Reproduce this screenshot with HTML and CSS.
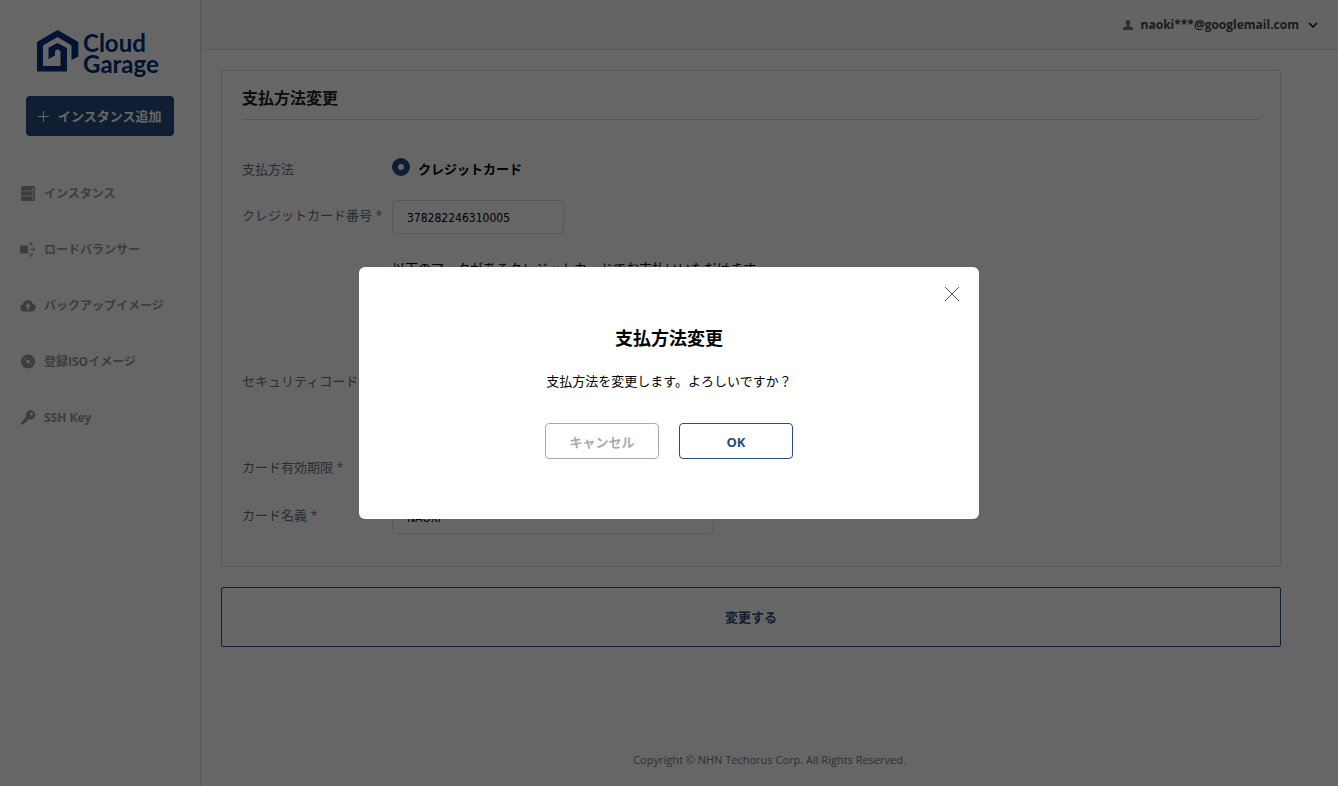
FILE: index.html
```html
<!DOCTYPE html>
<html lang="ja">
<head>
<meta charset="utf-8">
<title>支払方法変更 | Cloud Garage</title>
<link rel="stylesheet" href="styles.css">
</head>
<body>
<div class="app">
  <aside class="sidebar">
    <a class="logo" href="#">
      <svg class="logo-mark" viewBox="0 0 42 42" aria-hidden="true">
        <path d="M0 12 20.500 0 41.300 12V26.500L34.500 30V15.500L20.500 7 6 15.500V36H23.500V21L20.500 19.200 18 20.800V25.500L11.500 29V17.800L20.500 13 30 18V41.500H0Z"/>
      </svg>
      <span class="logo-text">
        <span>Cloud</span>
        <span>Garage</span>
      </span>
    </a>
    <button class="add-button" type="button">
      <svg class="add-icon" viewBox="0 0 11 11" aria-hidden="true"><path d="M5.5 0V11M0 5.5H11"/></svg>
      <span>インスタンス追加</span>
    </button>
    <nav class="nav">
      <a class="nav-item" href="#">
        <svg class="nav-icon" viewBox="0 0 16 16" aria-hidden="true"><path fill-rule="evenodd" d="M2 0H14Q15 0 15 1V4.500H1V1Q1 0 2 0ZM12 2V3.500H13.500V2ZM1 5.200H15V9.500H1ZM12 6.700V8.200H13.500V6.700ZM1 10.200H15V14Q15 15 14 15H2Q1 15 1 14ZM12 11.700V13.200H13.500V11.700Z"/></svg>
        <span>インスタンス</span>
      </a>
      <a class="nav-item" href="#">
        <svg class="nav-icon" viewBox="0 0 16 16" aria-hidden="true"><rect x="0" y="3.500" width="8" height="8" rx="1"/><path class="line" d="M10 7.500H15M12.800 5.300 15 7.500 12.800 9.700M9.500 3.500 12 1M9.500 1H12V3.500M9.500 11.500 12 14M12 11.500V14H9.500"/></svg>
        <span>ロードバランサー</span>
      </a>
      <a class="nav-item" href="#">
        <svg class="nav-icon" viewBox="0 0 16 16" aria-hidden="true"><path fill-rule="evenodd" d="M4 13.500A4 4 0 0 1 2.800 5.800 5.300 5.300 0 0 1 12.800 5.700 4 4 0 0 1 12.300 13.500ZM8 5 4.800 8.500H7V11.500H9V8.500H11.200Z"/></svg>
        <span>バックアップイメージ</span>
      </a>
      <a class="nav-item" href="#">
        <svg class="nav-icon" viewBox="0 0 16 16" aria-hidden="true"><path fill-rule="evenodd" d="M8 .5A7 7 0 1 1 8 14.500 7 7 0 0 1 8 .5ZM8 5.700A1.800 1.800 0 1 0 8 9.300 1.800 1.800 0 0 0 8 5.700Z"/><path class="shine" d="M3.800 6.500A4.500 4.500 0 0 1 7 3.300M12.200 8.500A4.500 4.500 0 0 1 9 11.700"/></svg>
        <span>登録ISOイメージ</span>
      </a>
      <a class="nav-item" href="#">
        <svg class="nav-icon" viewBox="0 0 16 16" aria-hidden="true"><path fill-rule="evenodd" d="M10.500.3A4.600 4.600 0 1 1 9 9.200L7.500 10V11.500H6L5.500 13H4L3 14.500H1V12.500L6.200 6.800A4.700 4.700 0 0 1 10.500.3ZM11.500 2.500A1.500 1.500 0 1 0 11.500 5.500 1.500 1.500 0 0 0 11.500 2.500Z"/></svg>
        <span>SSH Key</span>
      </a>
    </nav>
  </aside>
  <div class="page">
    <header class="topbar">
      <button class="account" type="button">
        <svg class="user-icon" viewBox="0 0 10 10" aria-hidden="true"><path d="M5 0C7.200 0 7.500 1.200 7.300 2.800 7.200 4 6.500 4.500 6.300 5.200V6.300C8 6.800 10 7 10 8.500V10H0V8.500C0 7 2 6.800 3.700 6.300V5.200C3.500 4.500 2.800 4 2.700 2.800 2.500 1.200 2.800 0 5 0Z"/></svg>
        <span>naoki***@googlemail.com</span>
        <svg class="chevron" viewBox="0 0 8 6" aria-hidden="true"><path d="M0 1 4 5 8 1"/></svg>
      </button>
    </header>
    <main class="content">
      <form class="form">
        <section class="card">
          <h1 class="card-title">支払方法変更</h1>
          <div class="rows">
            <div class="row row-method">
              <span class="label">支払方法</span>
              <label class="radio-label"><input class="radio" type="radio" name="method" checked><span>クレジットカード</span></label>
            </div>
            <div class="row">
              <label class="label" for="number">クレジットカード番号 <span class="required">*</span></label>
              <input class="input" id="number" type="text" value="378282246310005">
            </div>
            <div class="row row-note">
              <p class="note">以下のマークがあるクレジットカードでお支払いいただけます。</p>
            </div>
            <div class="row row-code">
              <label class="label" for="code">セキュリティコード <span class="required">*</span></label>
              <input class="input" id="code" type="text">
            </div>
            <div class="row">
              <label class="label" for="expiry">カード有効期限 <span class="required">*</span></label>
              <input class="input" id="expiry" type="text">
            </div>
            <div class="row">
              <label class="label" for="holder">カード名義 <span class="required">*</span></label>
              <input class="input input-wide" id="holder" type="text" value="NAOKI">
            </div>
          </div>
        </section>
        <button class="submit" type="button">変更する</button>
      </form>
    </main>
    <footer class="footer">Copyright © NHN Techorus Corp. All Rights Reserved.</footer>
  </div>
</div>
<div class="overlay">
  <div class="modal" role="dialog" aria-modal="true" aria-labelledby="modal-title">
    <button class="close" type="button" aria-label="閉じる">
      <svg class="close-icon" viewBox="0 0 14 14" aria-hidden="true"><path d="M0 0 14 14M14 0 0 14"/></svg>
    </button>
    <h2 class="modal-title" id="modal-title">支払方法変更</h2>
    <p class="modal-text">支払方法を変更します。よろしいですか？</p>
    <div class="modal-actions">
      <button class="modal-button cancel" type="button">キャンセル</button>
      <button class="modal-button" type="button">OK</button>
    </div>
  </div>
</div>
</body>
</html>
```

FILE: styles.css
```css
* {
  box-sizing: border-box;
}

body {
  margin: 0;
  background: #fff;
  color: #000;
  font: 13px/20px "Open Sans", "Noto Sans CJK JP", sans-serif;
}

button,
input {
  font: inherit;
}

button {
  cursor: pointer;
}

a {
  text-decoration: none;
}

h1,
h2,
p {
  margin: 0;
}

.app {
  display: flex;
  min-height: 100vh;
}

/* Sidebar */
.sidebar {
  flex: none;
  width: 201px;
  padding-top: 30px;
  border-right: 1px solid #dcdcdc;
}

.logo {
  display: flex;
  gap: 4px;
  height: 46px;
  margin-left: 37px;
  color: #00307c;
}

.logo-mark {
  width: 42px;
  height: 42px;
  fill: #00307c;
}

.logo-text {
  display: flex;
  flex-direction: column;
  padding-top: 2px;
  font: bold 24px/21px Lato, sans-serif;
}

.add-button {
  display: flex;
  align-items: center;
  gap: 9px;
  width: 148px;
  height: 40px;
  margin: 20px 0 0 26px;
  padding: 0 12px;
  border: 0;
  border-radius: 4px;
  background: #2a4c80;
  color: #fff;
  font-weight: bold;
  white-space: nowrap;
}

.add-icon {
  flex: none;
  width: 11px;
  height: 11px;
  fill: none;
  stroke: #fff;
}

.nav {
  display: flex;
  flex-direction: column;
  gap: 36px;
  padding: 48px 0 0 20px;
}

.nav-item {
  display: flex;
  align-items: center;
  gap: 8px;
  color: #949c9e;
  font-size: 12px;
  font-weight: bold;
}

.nav-icon {
  width: 16px;
  height: 16px;
  fill: #949c9e;
}

.nav-icon .line {
  fill: none;
  stroke: #949c9e;
}

.nav-icon .shine {
  fill: none;
  stroke: #c4caca;
}

/* Page */
.page {
  display: flex;
  flex: 1;
  flex-direction: column;
}

.topbar {
  display: flex;
  align-items: center;
  justify-content: flex-end;
  height: 50px;
  padding-right: 21px;
  border-bottom: 1px solid #dcdcdc;
  background: #fafafa;
}

.account {
  display: flex;
  align-items: center;
  padding: 0;
  border: 0;
  background: none;
  color: #444;
  font-size: 12px;
  font-weight: bold;
}

.user-icon {
  width: 10px;
  height: 10px;
  margin-right: 8px;
  fill: #66718a;
}

.chevron {
  width: 8px;
  height: 6px;
  margin-left: 10px;
  overflow: visible;
  fill: none;
  stroke: #000;
  stroke-width: 1.500;
}

.content {
  padding: 20px;
}

.form {
  max-width: 1060px;
}

.card {
  padding: 15px 20px 32px;
  border: 1px solid #dcdcdc;
  border-radius: 2px;
}

.card-title {
  padding-bottom: 9px;
  border-bottom: 1px solid #dcdcdc;
  color: #222;
  font-size: 16px;
  line-height: 24px;
}

.rows {
  display: flex;
  flex-direction: column;
  gap: 14px;
  padding-top: 32px;
}

.row {
  display: grid;
  grid-template-columns: 150px 1fr;
  align-items: start;
  min-height: 34px;
}

.label {
  color: #65718a;
  line-height: 30px;
  white-space: nowrap;
}

.row-method .label {
  line-height: 34px;
}

.required {
  color: #d0565a;
}

.radio-label {
  display: flex;
  gap: 8px;
  font-weight: bold;
  line-height: 34px;
}

.radio {
  appearance: none;
  width: 18px;
  height: 18px;
  margin: 6px 0 0;
  border: 6px solid #2a4c80;
  border-radius: 50%;
}

.input {
  width: 172px;
  height: 34px;
  padding: 2px 14px 0;
  border: 1px solid #dcdcdc;
  border-radius: 4px;
  background: #fff;
  color: #000;
  font-family: "DejaVu Sans Condensed", "Open Sans", "Noto Sans CJK JP", sans-serif;
  font-size: 12px;
}

.input-wide {
  width: 322px;
}

.row-note {
  min-height: 104px;
}

.note {
  grid-column: 2;
  padding-top: 10px;
}

.row-code {
  min-height: 72px;
}

.submit {
  display: block;
  width: 100%;
  height: 60px;
  margin-top: 20px;
  border: 1px solid #2a4c80;
  border-radius: 2px;
  background: #fff;
  color: #2a4c80;
  font-weight: bold;
}

.footer {
  margin-top: auto;
  padding-bottom: 16px;
  color: #777;
  font-size: 11px;
  text-align: center;
}

/* Confirmation dialog */
.overlay {
  position: fixed;
  inset: 0;
  display: flex;
  align-items: center;
  justify-content: center;
  background: rgba(0, 0, 0, 0.6);
}

.modal {
  display: flex;
  flex-direction: column;
  align-items: center;
  width: 620px;
  max-width: 100%;
  padding: 20px 20px 60px;
  border-radius: 6px;
  background: #fff;
}

.close {
  display: flex;
  align-self: flex-end;
  padding: 0;
  border: 0;
  background: none;
}

.close-icon {
  width: 14px;
  height: 14px;
  overflow: visible;
  fill: none;
  stroke: #555;
}

.modal-title {
  margin-top: 24px;
  font-size: 18px;
  line-height: 26px;
}

.modal-text {
  margin-top: 20px;
}

.modal-actions {
  display: flex;
  gap: 20px;
  margin-top: 32px;
}

.modal-button {
  width: 114px;
  height: 36px;
  padding: 2px 0 0;
  border: 1px solid #2a4c80;
  border-radius: 4px;
  background: #fff;
  color: #2a4c80;
  font-weight: bold;
}

.cancel {
  border-color: #a3adad;
  color: #a3adad;
}
```
